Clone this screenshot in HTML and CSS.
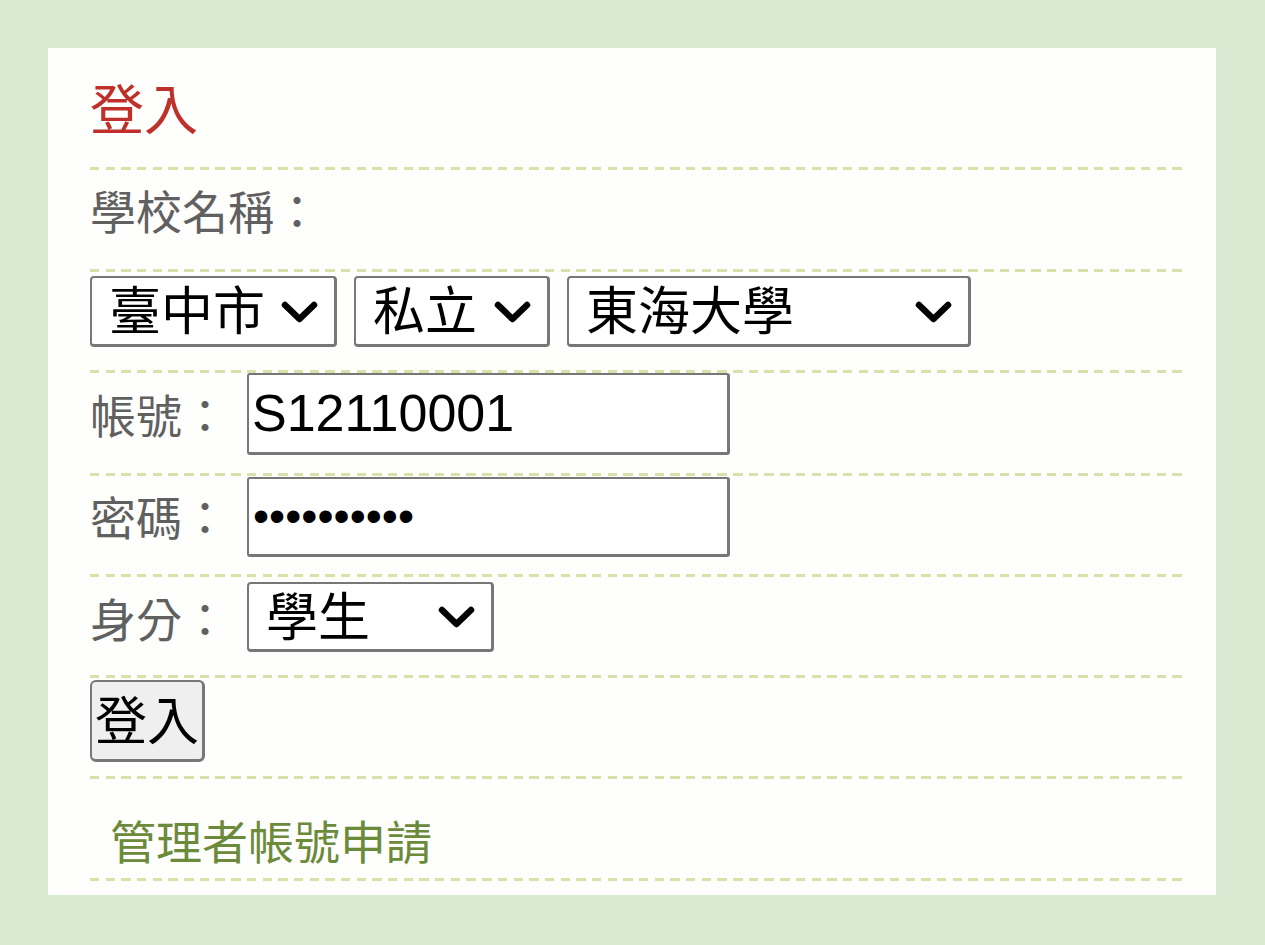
FILE: index.html
```html
<!DOCTYPE html>
<html lang="zh-Hant">
<head>
<meta charset="utf-8">
<title>登入</title>
<link rel="stylesheet" href="styles.css">
</head>
<body>
<div class="panel">
  <div class="row row-title"><h1 class="title">登入</h1></div>
  <div class="row row-school"><span class="label">學校名稱：</span></div>
  <div class="row row-selects">
    <span class="sel w1"><select class="select"><option>臺中市</option></select><svg class="arrow" viewBox="0 0 37 22"><polyline points="4,4 18.5,18 33,4"/></svg></span>
    <span class="sel w2"><select class="select"><option>私立</option></select><svg class="arrow" viewBox="0 0 37 22"><polyline points="4,4 18.5,18 33,4"/></svg></span>
    <span class="sel w3"><select class="select"><option>東海大學</option></select><svg class="arrow" viewBox="0 0 37 22"><polyline points="4,4 18.5,18 33,4"/></svg></span>
  </div>
  <div class="row row-account">
    <span class="label field-label">帳號：</span>
    <input class="text-input account" type="text" value="S12110001">
  </div>
  <div class="row row-password">
    <span class="label field-label pw-label">密碼：</span>
    <input class="text-input password" type="password" value="abcdefghij">
  </div>
  <div class="row row-role">
    <span class="label field-label role-label">身分：</span>
    <span class="sel w1"><select class="select"><option>學生</option></select><svg class="arrow" viewBox="0 0 37 22"><polyline points="4,4 18.5,18 33,4"/></svg></span>
  </div>
  <div class="row row-button"><button class="btn" type="button">登入</button></div>
  <div class="row row-link"><a class="link" href="#">管理者帳號申請</a></div>
</div>
</body>
</html>
```

FILE: styles.css
```css
html, body {
  margin: 0;
  padding: 0;
}
body {
  background: #d9e9d2;
  font-family: "Noto Sans CJK TC", "Liberation Sans", sans-serif;
  padding: 48px 0 0 48px;
  height: 945px;
  box-sizing: border-box;
}
.panel {
  width: 1168px;
  height: 847px;
  box-sizing: border-box;
  background: #fefefc;
  padding: 0 34px 0 42px;
}
.row {
  box-sizing: border-box;
  display: flex;
  align-items: flex-start;
  background-image: repeating-linear-gradient(90deg, #d8e1a9 0, #d8e1a9 9.4px, transparent 9.4px, transparent 15.686px);
  background-position: left bottom;
  background-size: 100% 3px;
  background-repeat: no-repeat;
}
.row-title { height: 122px; padding-top: 32px; }
.row-school { height: 102px; padding-top: 16px; }
.row-selects { height: 101px; padding-top: 4px; gap: 17px; }
.row-account { height: 103px; padding-top: 0; }
.row-password { height: 101px; padding-top: 1px; }
.row-role { height: 101px; padding-top: 5px; }
.row-button { height: 101px; padding-top: 2px; }
.row-link { height: 102px; padding-top: 37px; padding-left: 20px; }

.title {
  margin: 0;
  font-size: 54px;
  line-height: 1;
  font-weight: 400;
  color: #c0302a;
}
.label {
  font-size: 46px;
  line-height: 1;
  color: #606060;
}
.field-label {
  width: 157px;
  flex: none;
  padding-top: 17px;
}
.pw-label { padding-top: 15px; }
.role-label { padding-top: 12px; }

.sel {
  position: relative;
  display: inline-block;
  height: 71px;
  flex: none;
}
.row-role .sel { height: 70px; }
.w1 { width: 247px; }
.w2 { width: 196px; }
.w3 { width: 404px; }
.select {
  -webkit-appearance: none;
  appearance: none;
  display: block;
  width: 100%;
  height: 100%;
  box-sizing: border-box;
  margin: 0;
  border: 2px solid #777777;
  border-right-width: 3px;
  border-bottom-width: 3px;
  border-radius: 4px;
  background: #ffffff;
  color: #000000;
  font-family: "Noto Sans CJK TC", "Liberation Sans", sans-serif;
  font-size: 52px;
  line-height: 60px;
  padding: 0 60px 6px 17px;
}
.arrow {
  position: absolute;
  right: 19px;
  top: 50%;
  width: 37px;
  height: 22px;
  margin-top: -11px;
  pointer-events: none;
  fill: none;
  stroke: #000000;
  stroke-width: 6.5;
  stroke-linecap: round;
  stroke-linejoin: round;
}
.text-input {
  width: 483px;
  box-sizing: border-box;
  margin: 0;
  border: 2px solid #777777;
  border-right-width: 3px;
  border-bottom-width: 3px;
  border-radius: 3px;
  background: #ffffff;
  color: #000000;
  font-family: "Liberation Sans", Arial, sans-serif;
  font-size: 52px;
  padding: 0 4px 2px 3px;
  outline: none;
}
.account { height: 82px; }
.password { height: 80px; font-size: 46px; padding-left: 4px; }
.btn {
  width: 115px;
  height: 82px;
  box-sizing: border-box;
  margin: 0;
  border: 2px solid #777777;
  border-right-width: 3px;
  border-bottom-width: 3px;
  border-radius: 6px;
  background: #efefef;
  color: #000000;
  font-family: "Noto Sans CJK TC", "Liberation Sans", sans-serif;
  font-size: 52px;
  line-height: 1;
  padding: 0 0 6px 0;
}
.link {
  font-size: 46px;
  line-height: 1;
  color: #6b8a3a;
  text-decoration: none;
}
```
